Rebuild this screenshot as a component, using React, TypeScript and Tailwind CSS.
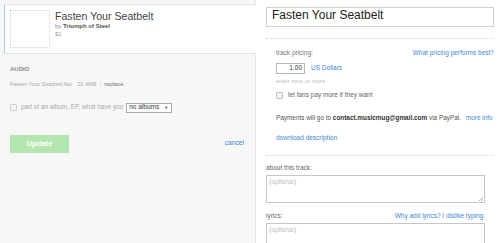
import React from "react";

const link = "text-[#3f88d8]";

export default function App() {
  return (
    <div
      className="w-[500px] h-[243px] overflow-hidden flex bg-white"
      style={{ fontFamily: '"Liberation Sans", Arial, sans-serif' }}
    >
      {/* Left column */}
      <div className="w-[255px] shrink-0 bg-[#f7f7f7] pt-[4px]">
        <div className="relative z-10 ml-[4px] w-[252px] h-[50px] bg-white border-y border-[#e3e3e3] border-l border-l-[#a8cdef] flex items-start">
          <div className="ml-[5px] mt-[5px] w-[40px] h-[38px] border border-dotted border-[#d4d4d4]" />
          <div className="ml-[5px] mt-[6px] flex flex-col">
            <div className="text-[10.6px] leading-[11px] text-[#444]">Fasten Your Seatbelt</div>
            <div className="mt-[1px] text-[6px] leading-[6px] text-[#888]">
              by <span className="font-bold text-[#555]">Triumph of Steel</span>
            </div>
            <div className="mt-[2px] text-[6px] leading-[6px] text-[#999]">$1</div>
          </div>
        </div>

        <div className="pl-[10px] pr-[11px]">
          <div className="mt-[12px] text-[6px] leading-[6px] font-bold text-[#888]">AUDIO</div>
          <div className="mt-[10px] text-[5.6px] leading-[5.6px] text-[#aaa] flex whitespace-nowrap">
            <span>Fasten Your Seatbelt.flac</span>
            <span className="ml-[5px]">22.4MB</span>
            <span className="ml-[3px] text-[#ccc]">|</span>
            <span className="ml-[3px] text-[#777] text-[6px]">replace</span>
          </div>
          <div className="mt-[15px] h-[10px] flex items-center whitespace-nowrap">
            <div className="w-[7px] h-[7px] border border-[#cfcfcf] rounded-[1px] bg-[#f4f4f4]" />
            <span className="ml-[4px] text-[6.4px] leading-[6.4px] text-[#aaa]">
              part of an album, EP, what have you
            </span>
            <div className="ml-[3px] w-[46px] h-[10px] border border-[#a9a9a9] bg-white flex items-center justify-between pl-[2px] pr-[3px]">
              <span className="text-[6.5px] leading-[6.5px] text-[#333]">no albums</span>
              <span className="text-[4px] leading-[4px] text-[#333]">▼</span>
            </div>
          </div>
          <div className="mt-[22px] flex items-center justify-between">
            <div className="w-[59px] h-[18px] bg-[#b4e6b0] flex items-center justify-center text-white font-bold text-[7.6px] leading-[7.6px]">
              Update
            </div>
            <span className={`text-[6.7px] leading-[6.7px] ${link}`}>cancel</span>
          </div>
        </div>
      </div>

      {/* Right column */}
      <div className="flex-1 min-w-0 border-l border-[#e8e8e8] pl-[10px] pr-[6px] pt-[7px] text-[6.5px] leading-[6.5px] whitespace-nowrap">
        <div className="h-[20px] border border-[#d0d0d0] pl-[5px] text-[12px] leading-[14px] text-[#222]">
          Fasten Your Seatbelt
        </div>
        <div className="mt-[11px] border-t border-dotted border-[#d6d6d6]" />

        <div className="pl-[10px]">
          <div className="mt-[11px] flex justify-between">
            <span className="text-[#777]">track pricing:</span>
            <span className={link}>What pricing performs best?</span>
          </div>
          <div className="mt-[6px] h-[11px] flex items-center">
            <div className="w-[29px] h-[11px] border border-[#b8b8b8] flex items-center justify-end pr-[2px] text-[#333]">
              1.00
            </div>
            <span className={`ml-[6px] ${link}`}>US Dollars</span>
          </div>
          <div className="mt-[4px] text-[6px] leading-[6px] text-[#bbb]">enter zero or more</div>
          <div className="mt-[8px] h-[7px] flex items-center">
            <div className="w-[7px] h-[7px] border border-[#bdbdbd] rounded-[1px] bg-[#f4f4f4]" />
            <span className="ml-[5px] text-[#666]">let fans pay more if they want</span>
          </div>
          <div className="mt-[16px] flex text-[#555] text-[6.4px] leading-[6.5px]">
            <span className="shrink-0">
              Payments will go to <span className="font-bold text-[#333]">contact.musicmug@gmail.com</span> via PayPal.
            </span>
            <span className={`ml-[5px] shrink-0 ${link}`}>more info</span>
          </div>
          <div className={`mt-[14px] ${link}`}>download description</div>
        </div>

        <div className="mt-[13px] border-t border-dotted border-[#d6d6d6]" />

        <div className="w-[219px]">
          <div className="mt-[9px] text-[#666]">about this track:</div>
          <div className="relative mt-[4px] h-[28px] border border-[#c6c6c6] pl-[2px] pt-[3px] text-[#bbb]">
            (optional)
            <svg className="absolute right-[1px] bottom-[1px]" width="5" height="5" viewBox="0 0 5 5">
              <path d="M1 5 L5 1 M3 5 L5 3" stroke="#999" strokeWidth="0.7" />
            </svg>
          </div>
          <div className="mt-[10px] flex justify-between">
            <span className="text-[#666]">lyrics:</span>
            <span className={link}>Why add lyrics? I dislike typing.</span>
          </div>
          <div className="mt-[3px] h-[28px] border border-[#c6c6c6] pl-[2px] pt-[3px] text-[#bbb]">
            (optional)
          </div>
        </div>
      </div>
    </div>
  );
}
